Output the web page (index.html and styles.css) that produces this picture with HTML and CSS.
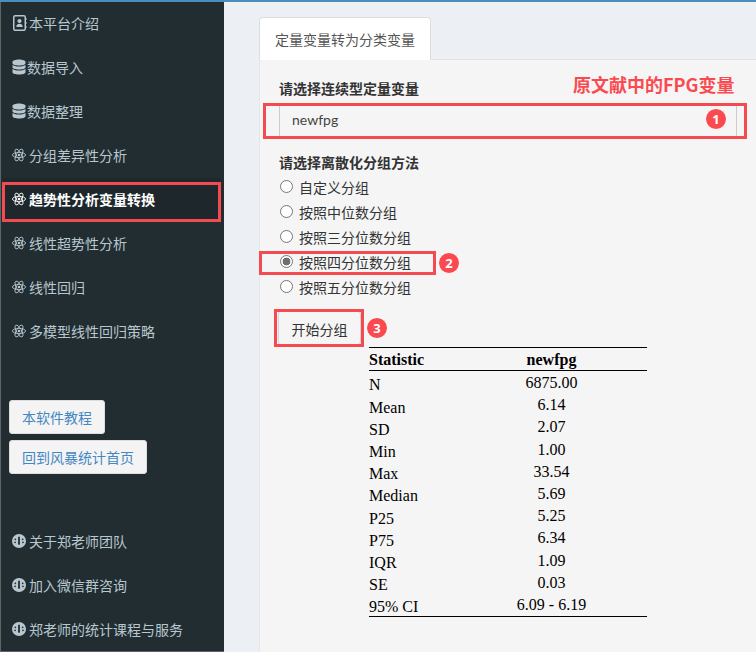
FILE: index.html
```html
<!DOCTYPE html>
<html lang="zh-CN">
<head>
<meta charset="utf-8">
<title>趋势性分析变量转换</title>
<link rel="stylesheet" href="styles.css">
</head>
<body>
<svg class="defs" width="0" height="0" aria-hidden="true">
  <symbol id="i-book" viewBox="0 0 14 16">
    <rect x=".75" y=".75" width="11.500" height="14.500" rx="1.500" fill="none" stroke="currentColor" stroke-width="1.500"/>
    <circle cx="6.500" cy="6" r="2.100" fill="currentColor"/>
    <path d="M3.300 12c0-2.300 1.300-3.200 3.200-3.200s3.200.9 3.200 3.200z" fill="currentColor"/>
    <path d="M12.500 4h1.500M12.500 8h1.500M12.500 12h1.500" stroke="currentColor" stroke-width="1.200"/>
  </symbol>
  <symbol id="i-db" viewBox="0 0 14 16">
    <path d="M7 .5C3.400.5.500 1.500.5 2.800v1.400C.5 5.500 3.400 6.500 7 6.500s6.500-1 6.500-2.300V2.800C13.500 1.500 10.600.5 7 .5z" fill="currentColor"/>
    <path d="M.5 5.700v2.500C.5 9.500 3.400 10.500 7 10.500s6.500-1 6.500-2.300V5.700C12.800 6.900 10 7.500 7 7.500S1.200 6.900.5 5.700z" fill="currentColor"/>
    <path d="M.5 9.700v3.500C.5 14.500 3.400 15.500 7 15.500s6.500-1 6.500-2.300V9.700c-.7 1.200-3.500 1.800-6.500 1.800S1.200 10.900.5 9.700z" fill="currentColor"/>
  </symbol>
  <symbol id="i-atom" viewBox="0 0 16 16">
    <g fill="none" stroke="currentColor" stroke-width="1">
      <ellipse cx="8" cy="8" rx="7.500" ry="3"/>
      <ellipse cx="8" cy="8" rx="7.500" ry="3" transform="rotate(60 8 8)"/>
      <ellipse cx="8" cy="8" rx="7.500" ry="3" transform="rotate(120 8 8)"/>
    </g>
    <circle cx="8" cy="8" r="1.500" fill="currentColor"/>
  </symbol>
  <symbol id="i-gauge" viewBox="0 0 16 16">
    <circle cx="8" cy="8" r="8" fill="currentColor"/>
    <path d="M7 3h2v7.500a1.200 1.200 0 1 1-2 0z" fill="#222d32"/>
    <circle cx="3.800" cy="6" r="1" fill="#222d32"/>
    <circle cx="12.200" cy="6" r="1" fill="#222d32"/>
    <circle cx="3.500" cy="9.500" r="1" fill="#222d32"/>
    <circle cx="12.500" cy="9.500" r="1" fill="#222d32"/>
  </symbol>
</svg>

<div class="app">
  <aside class="sidebar">
    <nav class="menu">
      <a class="item"><svg class="ico ico-book"><use href="#i-book"/></svg><span>本平台介绍</span></a>
      <a class="item"><svg class="ico ico-db"><use href="#i-db"/></svg><span>数据导入</span></a>
      <a class="item"><svg class="ico ico-db"><use href="#i-db"/></svg><span>数据整理</span></a>
      <a class="item"><svg class="ico"><use href="#i-atom"/></svg><span>分组差异性分析</span></a>
      <a class="item active"><svg class="ico"><use href="#i-atom"/></svg><span>趋势性分析变量转换</span></a>
      <a class="item"><svg class="ico"><use href="#i-atom"/></svg><span>线性超势性分析</span></a>
      <a class="item"><svg class="ico"><use href="#i-atom"/></svg><span>线性回归</span></a>
      <a class="item"><svg class="ico"><use href="#i-atom"/></svg><span>多模型线性回归策略</span></a>
    </nav>
    <div class="side-buttons">
      <a class="side-btn">本软件教程</a>
      <a class="side-btn">回到风暴统计首页</a>
    </div>
    <nav class="menu foot">
      <a class="item"><svg class="ico"><use href="#i-gauge"/></svg><span>关于郑老师团队</span></a>
      <a class="item"><svg class="ico"><use href="#i-gauge"/></svg><span>加入微信群咨询</span></a>
      <a class="item"><svg class="ico"><use href="#i-gauge"/></svg><span>郑老师的统计课程与服务</span></a>
    </nav>
    <div class="mark mark-side"></div>
  </aside>

  <main class="content">
    <div class="tabs"><div class="tab">定量变量转为分类变量</div></div>
    <section class="panel">
      <label class="field-label">请选择连续型定量变量</label>
      <div class="select">newfpg</div>
      <label class="field-label second">请选择离散化分组方法</label>
      <div class="radios">
        <label class="radio"><span class="dot"></span>自定义分组</label>
        <label class="radio"><span class="dot"></span>按照中位数分组</label>
        <label class="radio"><span class="dot"></span>按照三分位数分组</label>
        <label class="radio"><span class="dot on"></span>按照四分位数分组</label>
        <label class="radio"><span class="dot"></span>按照五分位数分组</label>
      </div>
      <button class="start" type="button">开始分组</button>
      <table class="stats">
        <thead><tr><th class="lab">Statistic</th><th>newfpg</th></tr></thead>
        <tbody>
          <tr><td class="lab">N</td><td>6875.00</td></tr>
          <tr><td class="lab">Mean</td><td>6.14</td></tr>
          <tr><td class="lab">SD</td><td>2.07</td></tr>
          <tr><td class="lab">Min</td><td>1.00</td></tr>
          <tr><td class="lab">Max</td><td>33.54</td></tr>
          <tr><td class="lab">Median</td><td>5.69</td></tr>
          <tr><td class="lab">P25</td><td>5.25</td></tr>
          <tr><td class="lab">P75</td><td>6.34</td></tr>
          <tr><td class="lab">IQR</td><td>1.09</td></tr>
          <tr><td class="lab">SE</td><td>0.03</td></tr>
          <tr><td class="lab">95% CI</td><td>6.09 - 6.19</td></tr>
        </tbody>
      </table>
    </section>
    <div class="note">原文献中的FPG变量</div>
    <div class="mark mark-select"></div>
    <div class="mark mark-radio"></div>
    <div class="mark mark-start"></div>
    <span class="badge badge-1">1</span>
    <span class="badge badge-2">2</span>
    <span class="badge badge-3">3</span>
  </main>
</div>
</body>
</html>
```
FILE: styles.css
```css
* { box-sizing: border-box; }
html, body { margin: 0; padding: 0; }
body {
  width: 756px;
  height: 652px;
  overflow: hidden;
  font-family: "Open Sans", "Noto Sans CJK SC", sans-serif;
  font-size: 14px;
  color: #333;
  background: #ecf0f5;
}
.defs { position: absolute; }
.app {
  display: flex;
  width: 756px;
  height: 652px;
  border-top: 2px solid #4a8dbb;
}
.sidebar {
  position: relative;
  flex: 0 0 224px;
  display: flex;
  flex-direction: column;
  background: #222d32;
  border-left: 1px solid #5c6467;
  border-bottom: 1px solid #5c6467;
}
.item {
  display: flex;
  align-items: center;
  gap: 3px;
  height: 44px;
  padding: 0 0 2px 11px;
  color: #b8c7ce;
  font-family: "Noto Sans CJK SC", sans-serif;
  font-size: 14px;
  white-space: nowrap;
}
.item.active {
  margin: 0 4px 0 2px;
  padding-left: 9px;
  color: #fff;
  font-weight: 700;
  background: #1e282c;
}
.ico { width: 14px; height: 14px; flex: none; color: #b8c7ce; }
.active .ico { color: #fff; }
.ico-book { width: 14px; height: 16px; margin-left: 1px; margin-right: -1px; }
.ico-db { width: 14px; height: 16px; margin-right: -2px; }
.side-buttons {
  display: flex;
  flex-direction: column;
  align-items: flex-start;
  gap: 6px;
  margin-top: 46px;
  padding-left: 8px;
}
.side-btn {
  display: block;
  height: 34px;
  line-height: 32px;
  padding: 0 12px;
  color: #4487c2;
  background: #f4f4f4;
  border: 1px solid #ddd;
  border-radius: 3px;
  font-family: "Noto Sans CJK SC", sans-serif;
}
.foot { margin-top: 46px; }
.content {
  position: relative;
  flex: 1;
  min-width: 0;
  padding: 15px 0 0 35px;
}
.tabs { display: flex; height: 42px; }
.tab {
  width: 172px;
  height: 43px;
  line-height: 42px;
  text-align: center;
  background: #fff;
  border: 1px solid #ddd;
  border-bottom: 0;
  border-radius: 4px 4px 0 0;
  font-family: "Noto Sans CJK SC", sans-serif;
  color: #555;
  position: relative;
  z-index: 1;
}
.panel {
  height: 593px;
  padding: 18px 19px 0 19px;
  background: #f5f5f5;
  border-top: 1px solid #e3e3e3;
  border-left: 1px solid #e6e6e6;
  border-radius: 4px 0 0 0;
}
.field-label {
  display: block;
  height: 20px;
  line-height: 20px;
  font-weight: 700;
  font-family: "Noto Sans CJK SC", sans-serif;
  color: #333;
}
.second { margin-top: 16px; }
.select {
  height: 32px;
  margin-top: 6px;
  padding-left: 12px;
  line-height: 32px;
  font-family: Lato, sans-serif;
  color: #444;
  background: #f5f5f5;
  border-left: 1px solid #ccc;
  border-right: 1px solid #ccc;
}
.radios { display: flex; flex-direction: column; margin-top: 2px; }
.radio {
  display: flex;
  align-items: center;
  height: 25px;
  font-family: "Noto Sans CJK SC", sans-serif;
  color: #333;
}
.dot {
  width: 13px;
  height: 13px;
  margin: 0 6px 0 1px;
  background: #fff;
  border: 1px solid #767676;
  border-radius: 50%;
}
.dot.on {
  background: radial-gradient(circle, #6f6f6f 0 3.6px, #fff 4.2px);
}
.start {
  display: block;
  width: 83px;
  height: 34px;
  margin-top: 12px;
  margin-left: -1px;
  padding: 1px 0 0;
  color: #333;
  background: #f5f5f5;
  border: 1px solid #d4d4d4;
  border-radius: 3px;
  font-family: "Noto Sans CJK SC", sans-serif;
  font-size: 14px;
}
.stats {
  width: 278px;
  margin: 2px auto 0;
  border-collapse: collapse;
  border-spacing: 0;
  border-top: 1px solid #000;
  border-bottom: 1px solid #000;
  font-family: "Liberation Serif", serif;
  font-size: 16px;
  color: #000;
  table-layout: fixed;
}
.stats th {
  height: 23px;
  padding: 2px 0 0;
  line-height: 20px;
  font-weight: 700;
  text-align: center;
  border-bottom: 1px solid #000;
}
.stats td {
  height: 22.2px;
  padding: 4px 0 0;
  line-height: 16px;
  text-align: center;
  vertical-align: top;
}
.stats tbody tr:last-child td { height: 24px; }
.stats .lab { width: 87px; text-align: left; }
.stats td.lab { padding-top: 7.4px; line-height: 14.8px; }
.note {
  position: absolute;
  left: 349px;
  top: 70px;
  font-family: "Noto Sans CJK SC", sans-serif;
  font-size: 18px;
  line-height: 24px;
  font-weight: 700;
  color: #fb4a4f;
  white-space: nowrap;
}
.mark {
  position: absolute;
  border: 3px solid #f34b4f;
  pointer-events: none;
}
.mark-side { left: 1px; top: 180px; width: 219px; height: 40px; }
.mark-select { left: 39px; top: 101px; width: 484px; height: 36px; }
.mark-radio { left: 35px; top: 249px; width: 177px; height: 24px; }
.mark-start { left: 50px; top: 307px; width: 90px; height: 38px; }
.badge {
  position: absolute;
  width: 22px;
  height: 22px;
  line-height: 20px;
  text-align: center;
  color: #fff;
  background: #fb4a4f;
  border: 1px solid #fff;
  border-radius: 50%;
  font-family: "Open Sans", sans-serif;
  font-size: 13px;
  font-weight: 700;
}
.badge-1 { left: 481px; top: 106px; }
.badge-2 { left: 214px; top: 250px; }
.badge-3 { left: 142px; top: 315px; }
```
